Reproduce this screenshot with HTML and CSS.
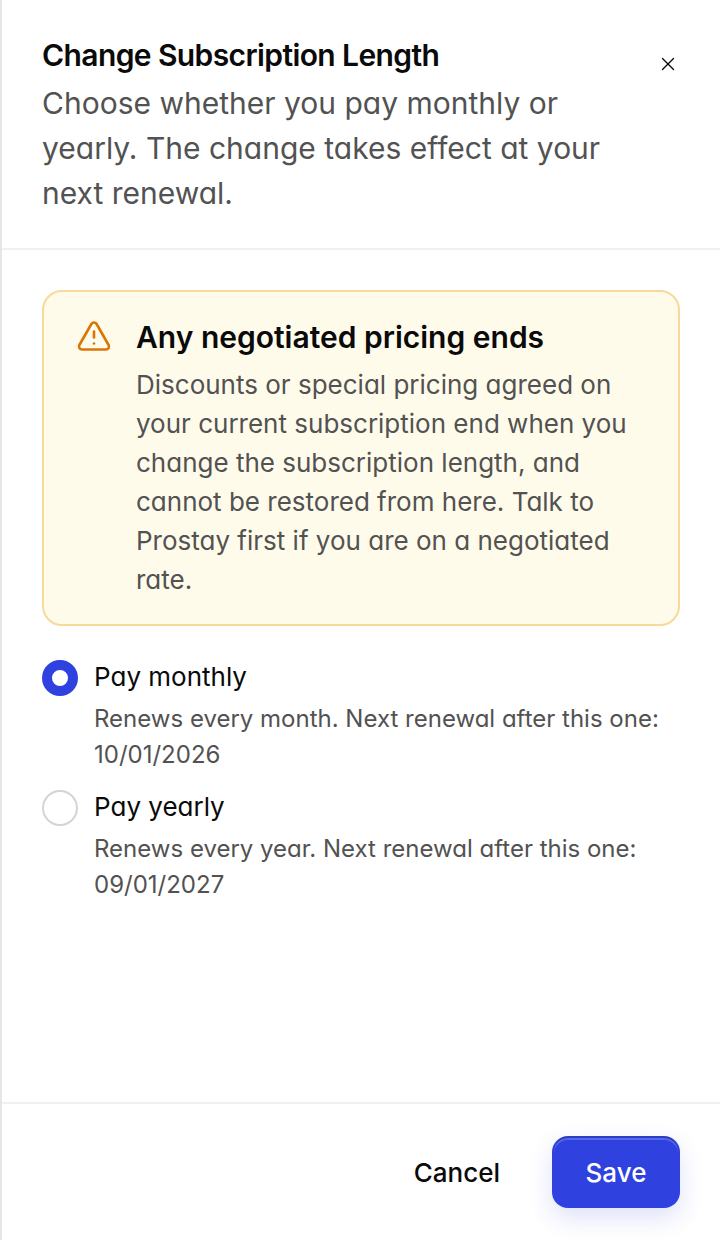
FILE: index.html
```html
<!DOCTYPE html>
<html lang="en">
<head>
    <meta charset="UTF-8">
    <meta name="viewport" content="width=device-width, initial-scale=1.0">
    <title>Change Subscription Length</title>
    <link rel="stylesheet" href="styles.css">
</head>
<body>
    <form class="sheet">
        <header class="sheet-header">
            <div class="sheet-heading">
                <h1 class="sheet-title">Change Subscription Length</h1>
                <p class="sheet-description">Choose whether you pay monthly or yearly. The change takes effect at your next renewal.</p>
            </div>
            <button type="button" class="close-button" aria-label="Close">
                <svg class="close-icon" viewBox="0 0 24 24" aria-hidden="true">
                    <path d="M18 6 6 18"/>
                    <path d="m6 6 12 12"/>
                </svg>
            </button>
        </header>

        <main class="sheet-body">
            <section class="alert">
                <svg class="alert-icon" viewBox="0 0 24 24" aria-hidden="true">
                    <path d="m21.73 18-8-14a2 2 0 0 0-3.48 0l-8 14A2 2 0 0 0 4 21h16a2 2 0 0 0 1.73-3"/>
                    <path d="M12 9v4"/>
                    <path d="M12 17h.01"/>
                </svg>
                <div class="alert-content">
                    <h2 class="alert-title">Any negotiated pricing ends</h2>
                    <p class="alert-text">Discounts or special pricing agreed on your current subscription end when you change the subscription length, and cannot be restored from here. Talk to Prostay first if you are on a negotiated rate.</p>
                </div>
            </section>

            <div class="options" role="radiogroup" aria-label="Subscription length">
                <div class="option">
                    <input type="radio" class="option-radio" name="length" id="monthly" value="monthly" aria-describedby="monthlyHint" checked>
                    <div class="option-content">
                        <label class="option-label" for="monthly">Pay monthly</label>
                        <p class="option-hint" id="monthlyHint">Renews every month. Next renewal after this one: 10/01/2026</p>
                    </div>
                </div>
                <div class="option">
                    <input type="radio" class="option-radio" name="length" id="yearly" value="yearly" aria-describedby="yearlyHint">
                    <div class="option-content">
                        <label class="option-label" for="yearly">Pay yearly</label>
                        <p class="option-hint" id="yearlyHint">Renews every year. Next renewal after this one: 09/01/2027</p>
                    </div>
                </div>
            </div>
        </main>

        <footer class="sheet-footer">
            <button type="button" class="button">Cancel</button>
            <button type="submit" class="button button-primary">Save</button>
        </footer>
    </form>
</body>
</html>
```
FILE: styles.css
```css
* {
    margin: 0;
    padding: 0;
    box-sizing: border-box;
}

body {
    font-family: Inter, "Liberation Sans", sans-serif;
    font-variation-settings: "opsz" 14;
    background: #fff;
    color: #0a0a0a;
}

.sheet {
    display: flex;
    flex-direction: column;
    min-height: 100vh;
    border-left: 2px solid #e5e5e5;
}

.sheet-header {
    display: flex;
    align-items: flex-start;
    justify-content: space-between;
    padding: 40px 28px 32px 40px;
    border-bottom: 2px solid #f0f0f0;
}

.sheet-heading {
    display: flex;
    flex-direction: column;
    gap: 11px;
}

.sheet-title {
    font-size: 30px;
    line-height: 30px;
    font-weight: 600;
    letter-spacing: -0.02em;
}

/* single-storey "a" for running text */
.sheet-description,
.alert-text,
.option-label,
.option-hint {
    font-feature-settings: "cv11";
}

.sheet-description {
    font-size: 30px;
    line-height: 45px;
    color: #525252;
}

.close-button {
    display: flex;
    align-items: center;
    justify-content: center;
    flex: none;
    width: 48px;
    height: 48px;
    border: none;
    border-radius: 12px;
    background: transparent;
    color: inherit;
    cursor: pointer;
}

.close-icon {
    width: 22px;
    height: 22px;
    fill: none;
    stroke: currentColor;
    stroke-width: 1.5;
    stroke-linecap: round;
}

.sheet-body {
    flex: 1;
    display: flex;
    flex-direction: column;
    gap: 32px;
    padding: 40px;
}

.alert {
    display: flex;
    align-items: flex-start;
    gap: 24px;
    padding: 24px 32px 25px;
    border: 2px solid #f8d99b;
    border-radius: 20px;
    background: #fffbeb;
}

.alert-icon {
    flex: none;
    width: 36px;
    height: 36px;
    margin-top: 2px;
    fill: none;
    stroke: #d97706;
    stroke-width: 1.75;
    stroke-linecap: round;
    stroke-linejoin: round;
}

.alert-content {
    display: flex;
    flex-direction: column;
    gap: 7px;
}

.alert-title {
    font-size: 30px;
    line-height: 42px;
    font-weight: 600;
}

.alert-text {
    font-size: 26px;
    line-height: 39px;
    color: #525252;
}

.options {
    display: flex;
    flex-direction: column;
    gap: 15px;
}

.option {
    display: flex;
    align-items: flex-start;
    gap: 16px;
}

.option-radio {
    appearance: none;
    flex: none;
    width: 36px;
    height: 36px;
    margin-top: 2px;
    border: 2px solid #d4d4d4;
    border-radius: 50%;
    background: #fff;
    cursor: pointer;
}

.option-radio:checked {
    border: 10px solid #2f42e0;
}

.option-content {
    display: flex;
    flex-direction: column;
    gap: 5px;
}

.option-label {
    font-size: 26px;
    line-height: 38px;
    cursor: pointer;
}

.option-hint {
    font-size: 24px;
    line-height: 36px;
    color: #525252;
}

.sheet-footer {
    display: flex;
    justify-content: flex-end;
    gap: 20px;
    padding: 32px 40px;
    border-top: 2px solid #f0f0f0;
}

.button {
    min-width: 128px;
    height: 72px;
    padding: 0 32px;
    border: none;
    border-radius: 16px;
    background: transparent;
    color: inherit;
    font: inherit;
    font-size: 26px;
    font-weight: 500;
    cursor: pointer;
}

.button-primary {
    padding: 0 30px;
    border: 2px solid #2f42e0;
    border-top-color: #2c3ec9;
    background: #2f42e0;
    color: #fff;
    box-shadow: inset 0 2px 0 rgba(255, 255, 255, 0.2), 0 10px 24px rgba(47, 66, 224, 0.16);
}
```
